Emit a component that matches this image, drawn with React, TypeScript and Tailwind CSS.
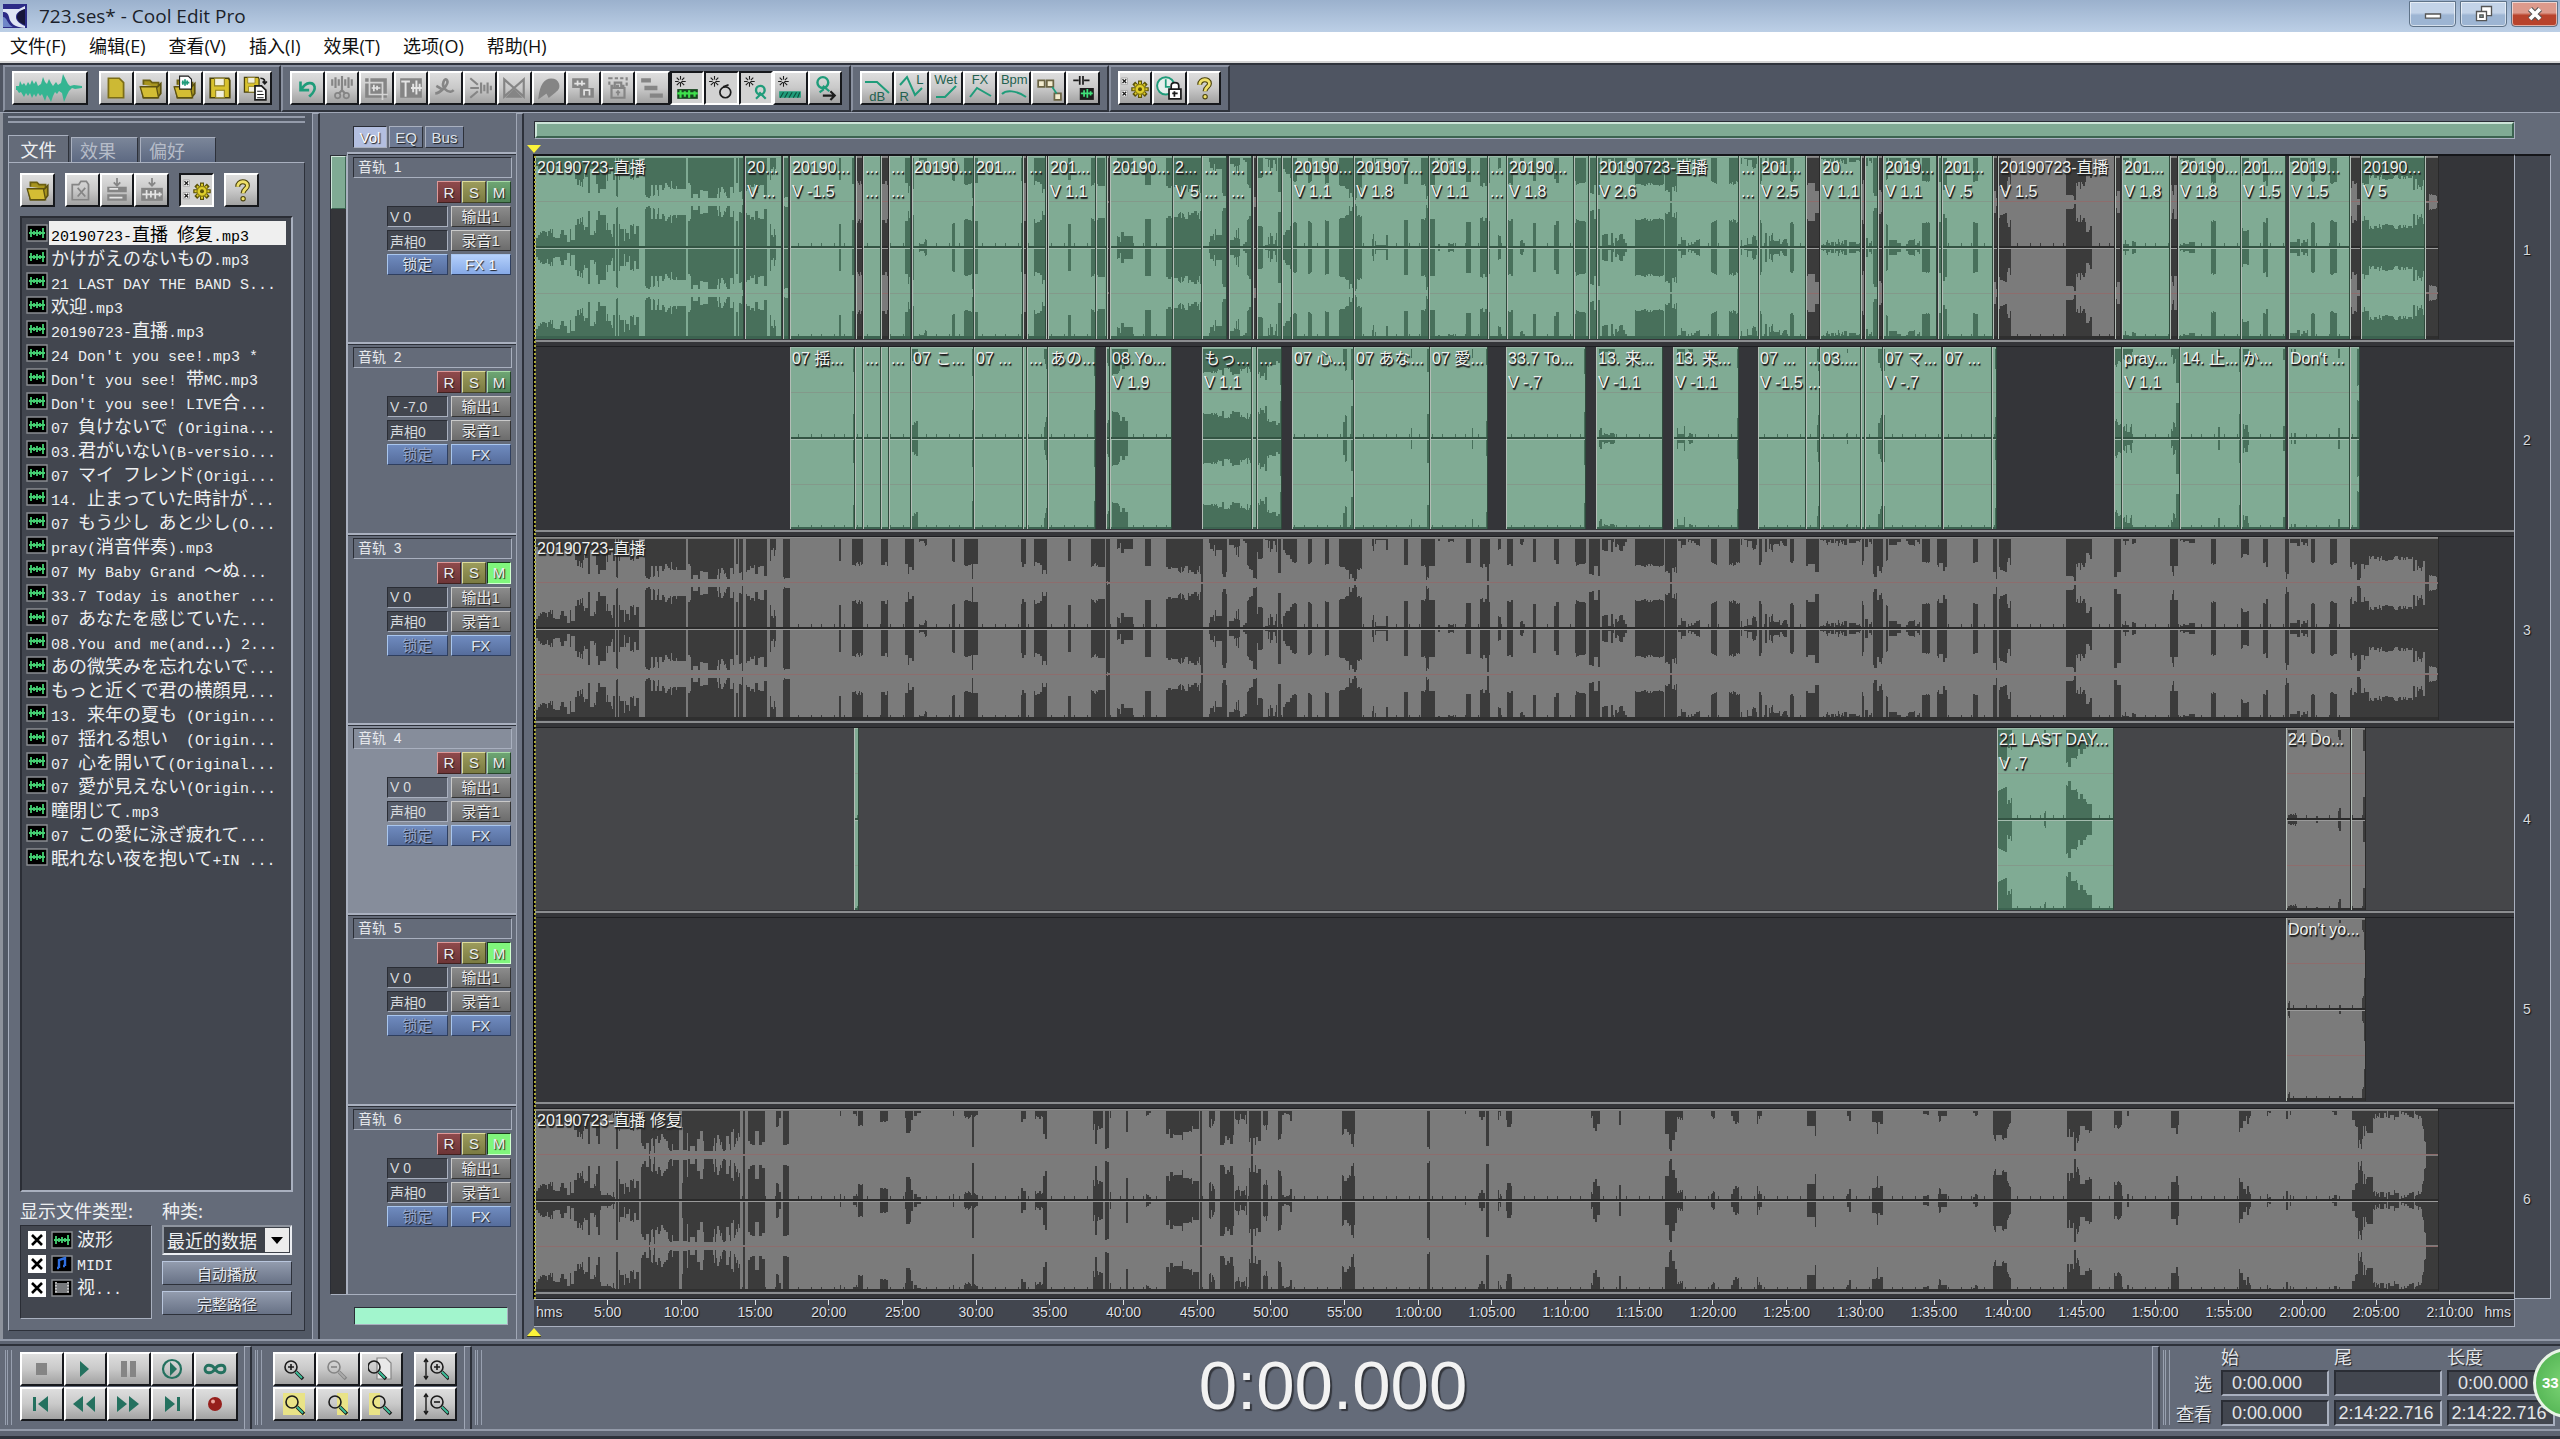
import type { ReactNode } from 'react'
import clsx from 'clsx'

/** Session length in timeline units; one unit is one pixel at full width. */
const SPAN = 1979
const TRACK_H = 182

/** [start, end, min depth, max depth]: where the peaks fall short of full scale. */
type Dip = [number, number, number, number]

const LIVE: Dip[] = [
  [0, 40, 0.08, 0.4], [40, 78, 0.2, 0.85], [78, 80, 0.3, 0.5], [81, 83, 0.85, 0.88], [84, 104, 0.1, 0.5],
  [110, 116, 0.75, 0.95], [116, 136, 0.55, 0.85], [136, 151, 0.5, 0.7], [153, 168, 0.5, 0.9], [168, 199, 0.5, 0.9],
  [201, 203, 0.4, 0.6], [204, 208, 0.7, 0.95], [211, 222, 0.5, 0.85], [222, 232, 0.6, 0.85], [235, 241, 0.2, 0.5],
  [248, 255, 0.84, 0.88], [304, 306, 0.45, 0.5], [317, 328, 0.5, 0.65], [346, 353, 0.5, 0.6], [370, 379, 0.55, 0.8],
  [384, 392, 0, 0.2], [417, 420, 0.48, 0.52], [429, 443, 0.55, 0.6], [437, 438, 0.9, 0.9], [486, 491, 0.5, 0.65],
  [499, 507, 0.5, 0.6], [507, 512, 0.65, 0.8], [533, 536, 0.45, 0.5], [556, 570, 0.5, 0.65], [571, 575, 0.93, 0.98],
  [582, 598, 0, 0.4], [610, 616, 0.55, 0.62], [631, 666, 0.6, 0.78], [666, 668, 1, 1], [674, 687, 0, 0.4],
  [687, 692, 0.6, 0.9], [694, 712, 0, 0.4], [712, 718, 0.55, 0.7], [718, 722, 0.85, 0.95], [722, 728, 0.2, 0.5],
  [730, 742, 0, 0.3], [743, 746, 0.7, 0.8], [748, 757, 0.2, 0.5], [757, 762, 0.5, 0.6], [773, 777, 0.5, 0.55],
  [790, 794, 0.55, 0.6], [804, 827, 0.6, 0.7], [814, 822, 0.78, 0.95], [837, 853, 0, 0.3], [869, 873, 0.55, 0.6],
  [886, 900, 0.58, 0.62], [891, 894, 0.85, 0.95], [902, 920, 0, 0.08], [931, 936, 0.5, 0.6], [945, 955, 0.55, 0.65],
  [952, 954, 0.9, 0.95], [963, 966, 0.1, 0.4], [972, 978, 0.55, 0.62], [985, 989, 0, 0.15], [998, 1001, 0.5, 0.55],
  [1019, 1024, 0.45, 0.6], [1040, 1051, 0.5, 0.6], [1054, 1059, 0.6, 0.8], [1059, 1065, 0.6, 0.95],
  [1067, 1092, 0, 0.3], [1100, 1129, 0.55, 0.62], [1130, 1142, 0.6, 0.8], [1135, 1137, 0.95, 0.98],
  [1143, 1165, 0, 0.2], [1176, 1182, 0.52, 0.58], [1194, 1205, 0.5, 0.6], [1206, 1222, 0, 0.25],
  [1224, 1227, 0.5, 0.58], [1230, 1252, 0, 0.3], [1255, 1259, 0.48, 0.55], [1271, 1280, 0.5, 0.6],
  [1280, 1284, 0.6, 0.9], [1285, 1326, 0, 0.15], [1327, 1329, 0.4, 0.6], [1330, 1340, 0, 0.2], [1338, 1348, 0.5, 0.9],
  [1351, 1353, 0.45, 0.5], [1354, 1385, 0, 0.15], [1387, 1395, 0.5, 0.55], [1402, 1412, 0.5, 0.75],
  [1438, 1443, 0.5, 0.55], [1458, 1462, 0.7, 0.9], [1464, 1472, 0.6, 0.75], [1472, 1476, 0.3, 0.6],
  [1531, 1538, 0.6, 0.85], [1538, 1541, 0.85, 0.95], [1541, 1551, 0.5, 0.7], [1551, 1557, 0.3, 0.5],
  [1579, 1586, 0.6, 0.9], [1588, 1601, 0, 0.2], [1635, 1643, 0.55, 0.9], [1645, 1660, 0, 0.12],
  [1676, 1681, 0.52, 0.57], [1706, 1714, 0.3, 0.5], [1728, 1733, 0.5, 0.65], [1750, 1754, 0.7, 0.9],
  [1755, 1773, 0, 0.2], [1776, 1780, 0.5, 0.55], [1795, 1802, 0.5, 0.58], [1815, 1822, 0.5, 0.7],
  [1822, 1826, 0.8, 0.95], [1826, 1834, 0.5, 0.7], [1834, 1878, 0.35, 0.5], [1878, 1890, 0.45, 0.75],
  [1890, 1894, 1, 1], [1894, 1902, 0.78, 0.85], [1902, 1906, 1, 1],
]

const REPAIRED: Dip[] = [
  [0, 39, 0.08, 0.4], [39, 65, 0.2, 0.8], [65, 80, 0.05, 0.2], [81, 83, 0.8, 0.85], [84, 104, 0.1, 0.45],
  [106, 122, 0.55, 0.95], [122, 144, 0.5, 0.9], [147, 205, 0.35, 0.9], [208, 210, 1, 1], [213, 230, 0.45, 0.8],
  [241, 246, 0.1, 0.5], [248, 254, 0.73, 0.76], [305, 306, 0.1, 0.1], [318, 322, 0.05, 0.15], [323, 328, 0.3, 0.35],
  [345, 353, 0.22, 0.25], [370, 378, 0.1, 0.5], [378, 386, 0, 0.18], [418, 419, 0.1, 0.1], [429, 443, 0.08, 0.17],
  [437, 439, 0.8, 0.8], [486, 491, 0.15, 0.4], [500, 508, 0.1, 0.2], [508, 512, 0.5, 0.65], [558, 568, 0.2, 0.45],
  [560, 562, 0.7, 0.75], [570, 574, 0.8, 0.85], [575, 580, 0, 0.2], [591, 593, 0.4, 0.5], [611, 616, 0, 0.12],
  [631, 664, 0.3, 0.7], [665, 667, 1, 1], [674, 680, 0.15, 0.4], [685, 699, 0.3, 0.75], [700, 712, 0, 0.3],
  [714, 726, 0.55, 0.8], [716, 718, 0.95, 0.95], [728, 733, 0.2, 0.45], [743, 747, 0.5, 0.68], [747, 757, 0, 0.3],
  [807, 820, 0.4, 0.55], [816, 819, 0.7, 0.85], [892, 895, 0.7, 0.85], [930, 934, 0, 0.12], [944, 950, 0, 0.2],
  [951, 954, 0.75, 0.85], [963, 966, 0, 0.2], [971, 977, 0.2, 0.4], [1056, 1065, 0.1, 0.5], [1084, 1086, 0.3, 0.4],
  [1130, 1142, 0.3, 0.7], [1134, 1137, 0.8, 0.9], [1142, 1148, 0.1, 0.2], [1176, 1180, 0.1, 0.2],
  [1196, 1204, 0.1, 0.3], [1222, 1227, 0.1, 0.3], [1272, 1281, 0.3, 0.6], [1312, 1316, 0.1, 0.3],
  [1337, 1348, 0.2, 0.55], [1388, 1395, 0, 0.15], [1403, 1412, 0.1, 0.3], [1438, 1443, 0.05, 0.12],
  [1458, 1472, 0.5, 0.68], [1472, 1476, 0.2, 0.4], [1532, 1545, 0.4, 0.75], [1539, 1541, 0.85, 0.9],
  [1545, 1557, 0.25, 0.5], [1579, 1587, 0.3, 0.45], [1592, 1594, 0.1, 0.12], [1636, 1644, 0.3, 0.65],
  [1704, 1708, 0.3, 0.5], [1708, 1716, 0.1, 0.3], [1732, 1736, 0, 0.12], [1751, 1756, 0, 0.18], [1796, 1802, 0, 0.1],
  [1817, 1823, 0.15, 0.4], [1823, 1828, 0.6, 0.98], [1828, 1838, 0.3, 0.6], [1838, 1887, 0, 0.2],
  [1887, 1889, 0.3, 0.4], [1889, 1891, 0.6, 0.7], [1891, 1906, 1, 1],
]

const BACKING: Dip[] = [
  [318, 320, 0.5, 0.5], [376, 383, 0.1, 0.4], [437, 439, 0.6, 0.6], [509, 512, 0.2, 0.5], [559, 561, 0.6, 0.6],
  [571, 575, 0.2, 0.4], [577, 583, 0.5, 0.7], [583, 593, 0.35, 0.55], [668, 717, 0.4, 0.6], [722, 732, 0.5, 0.7],
  [732, 745, 0.1, 0.4], [745, 747, 0.8, 0.8], [808, 812, 0.3, 0.5], [816, 819, 0.7, 0.7], [876, 877, 0.2, 0.2],
  [892, 894, 0.5, 0.5], [937, 938, 0.2, 0.2], [951, 953, 0.3, 0.6], [1049, 1051, 0.5, 0.8], [1064, 1070, 0.05, 0.25],
  [1070, 1080, 0, 0.1], [1142, 1150, 0.05, 0.25], [1150, 1158, 0, 0.1], [1202, 1204, 0.3, 0.6], [1282, 1285, 0.2, 0.5],
  [1312, 1316, 0, 0.1], [1343, 1350, 0.3, 0.5], [1406, 1409, 0.3, 0.6], [1460, 1463, 0.4, 0.8], [1579, 1586, 0.2, 0.4],
  [1586, 1598, 0, 0.3], [1636, 1641, 0.1, 0.4], [1641, 1645, 0.5, 0.8], [1683, 1685, 0.2, 0.25], [1704, 1706, 0.5, 0.5],
  [1708, 1714, 0.1, 0.3], [1748, 1751, 0.2, 0.6], [1756, 1761, 0, 0.12], [1803, 1805, 0.2, 0.25], [1822, 1825, 0.5, 0.9],
]

const INSERT: Dip[] = [
  [1463, 1472, 0.6, 0.7], [1472, 1477, 0.2, 0.5], [1509, 1511, 0.1, 0.15], [1531, 1541, 0.5, 0.85],
  [1541, 1551, 0.4, 0.65], [1551, 1557, 0.1, 0.5], [1753, 1762, 0, 0.15], [1781, 1785, 0, 0.05], [1803, 1806, 0.1, 0.25],
  [1828, 1831, 0.3, 0.5],
]

const ENCORE: Dip[] = [[1753, 1755, 0.1, 0.3], [1804, 1806, 0.05, 0.08], [1827, 1829, 0.2, 0.3], [1829, 1831, 0.5, 0.8]]

type Clip = { at: [number, number]; label?: string; vol?: string; muted?: boolean }

const c = (from: number, to: number, label?: string, vol?: string): Clip => ({ at: [from, to], label, vol })
const m = (from: number, to: number, label?: string, vol?: string): Clip => ({ at: [from, to], label, vol, muted: true })

type Track = { id: number; vol: string; on?: boolean; fx?: boolean; active?: boolean; dips: Dip[]; clips: Clip[] }

const TRACKS: Track[] = [
  {
    id: 1,
    vol: 'V 0',
    fx: true,
    dips: LIVE,
    clips: [
      c(0, 209, '20190723-直播'), c(210, 247, '20...', 'V ...'), c(248, 254), c(255, 320, '20190...', 'V -1.5'), m(321, 328),
      c(328, 346, '...', '...'), m(346, 354), c(354, 376, '...', '...'), c(377, 439, '20190...'), c(439, 488, '201...'),
      m(488, 492), c(492, 511, '...'), m(511, 513), c(513, 561, '201...', 'V 1.1'), c(561, 572), m(572, 575),
      c(575, 638, '20190...'), c(638, 667, '2...', 'V 5'), c(667, 692, '...', '...'), c(694, 717, '...', '...'), m(718, 722),
      c(722, 747, '...'), c(747, 757), c(757, 819, '20190...', 'V 1.1'), c(819, 894, '201907...', 'V 1.8'),
      c(894, 953, '2019...', 'V 1.1'), c(953, 972, '...', '...'), c(972, 1039, '20190...', 'V 1.8'), c(1039, 1054),
      c(1054, 1062), c(1062, 1204, '20190723-直播', 'V 2.6'), c(1204, 1224, '...', '...'), c(1224, 1271, '201...', 'V 2.5'),
      m(1271, 1285), c(1285, 1326, '20...', 'V 1.1'), m(1326, 1330), c(1330, 1343), m(1343, 1348),
      c(1348, 1402, '2019...', 'V 1.1'), c(1403, 1407), c(1407, 1458, '201...', 'V .5'), m(1458, 1463),
      m(1463, 1580, '20190723-直播', 'V 1.5'), m(1580, 1586), c(1587, 1635, '201...', 'V 1.8'), m(1635, 1643),
      c(1643, 1706, '20190...', 'V 1.8'), c(1706, 1751, '201...', 'V 1.5'), c(1754, 1815, '2019...', 'V 1.5'),
      m(1815, 1826), c(1826, 1890, '20190...', 'V 5'), m(1890, 1904),
    ],
  },
  {
    id: 2,
    vol: 'V -7.0',
    dips: BACKING,
    clips: [
      c(255, 320, '07 揺...'), c(320, 328), c(328, 346, '...'), c(346, 354), c(354, 376, '...'), c(376, 439, '07 こ...'),
      c(439, 488, '07 ...'), c(488, 492), c(492, 513, '...'), c(513, 561, 'あの...'), c(571, 575), c(575, 637, '08.Yo...', 'V 1.9'),
      c(667, 717, 'もっ...', 'V 1.1'), c(717, 722), c(722, 747, '...'), c(757, 819, '07 心...'), c(819, 895, '07 あな...'),
      c(895, 953, '07 愛...'), c(971, 1051, '33.7 To...', 'V -.7'), c(1061, 1128, '13. 来...', 'V -1.1'),
      c(1138, 1204, '13. 来...', 'V -1.1'), c(1223, 1271, '07 ...', 'V -1.5'), c(1271, 1285, '...', '...'),
      c(1285, 1326, '03....'), c(1326, 1330), c(1330, 1348), c(1348, 1407, '07 マ...', 'V -.7'), c(1408, 1457, '07 ...'),
      c(1457, 1462), c(1579, 1587), c(1587, 1645, 'pray...', 'V 1.1'), c(1645, 1706, '14. 止...'), c(1706, 1751, 'か...'),
      c(1753, 1815, "Don't ..."), c(1815, 1825),
    ],
  },
  { id: 3, vol: 'V 0', on: true, dips: LIVE, clips: [m(0, 1904, '20190723-直播')] },
  {
    id: 4,
    vol: 'V 0',
    active: true,
    dips: INSERT,
    clips: [c(319, 324), c(1462, 1579, '21 LAST DAY...', 'V .7'), m(1751, 1816, '24 Do...'), m(1816, 1831)],
  },
  { id: 5, vol: 'V 0', on: true, dips: ENCORE, clips: [m(1751, 1831, "Don't yo...")] },
  { id: 6, vol: 'V 0', on: true, dips: REPAIRED, clips: [m(0, 1904, '20190723-直播 修复')] },
]

const FILES = [
  '20190723-直播 修复.mp3', 'かけがえのないもの.mp3', '21 LAST DAY THE BAND S...', '欢迎.mp3', '20190723-直播.mp3',
  "24 Don't you see!.mp3 *", "Don't you see! 带MC.mp3", "Don't you see! LIVE合...", '07 負けないで (Origina...',
  '03.君がいない(B-versio...', '07 マイ フレンド(Origi...', '14. 止まっていた時計が...', '07 もう少し あと少し(O...',
  'pray(消音伴奏).mp3', '07 My Baby Grand ～ぬ...', '33.7 Today is another ...', '07 あなたを感じていた...',
  '08.You and me(and…) 2...', 'あの微笑みを忘れないで...', 'もっと近くで君の横顔見...', '13. 来年の夏も (Origin...',
  '07 揺れる想い　(Origin...', '07 心を開いて(Original...', '07 愛が見えない(Origin...', '瞳閉じて.mp3',
  '07 この愛に泳ぎ疲れて...', '眠れない夜を抱いて+IN ...',
]

const TICKS = Array.from({ length: 26 }, (_, i) => {
  const min = (i + 1) * 5
  return min < 60 ? `${min}:00` : `${Math.floor(min / 60)}:${String(min % 60).padStart(2, '0')}:00`
})

const RAISED = 'border border-t-[#a9b0bf] border-l-[#a9b0bf] border-b-[#2d313a] border-r-[#2d313a]'
const SUNKEN = 'border border-t-[#2a2d35] border-l-[#2a2d35] border-b-[#a9b0bf] border-r-[#a9b0bf]'
const SHADOW = '[text-shadow:1px_1px_1px_#1a1c20]'

/** Expands a dip list to one depth per unit. Seeded, so it draws the same each time. */
function depths(dips: Dip[]) {
  const out = new Float32Array(SPAN)
  let seed = 7
  const rand = () => (seed = (seed * 16807) % 2147483647) / 2147483647
  for (const [from, to, lo, hi] of dips) {
    let v = 0
    for (let x = from; x < to; x++) {
      if (x === from || rand() > 0.45) v = lo + rand() * (hi - lo)
      out[x] = v
    }
  }
  return out
}

function Waves({ track }: { track: Track }) {
  const d = depths(track.dips)
  return (
    <svg
      className="absolute inset-0 size-full"
      viewBox={`0 0 ${SPAN} ${TRACK_H}`}
      preserveAspectRatio="none"
      shapeRendering="crispEdges"
      aria-hidden="true"
    >
      {track.clips.map(({ at: [a, b], muted }) => {
        const dark = muted ? '#3b3b3b' : '#48705b'
        let path = ''
        for (let x = a; x < b; x++) {
          const h = d[x] * 45
          const floor = d[x] === 0 && (x * 7919) % 23 < 2 ? 3 : h
          for (const top of [1, 92]) {
            if (h > 1) path += `M${x} ${top + 1}h1v${h.toFixed(0)}h-1z`
            if (floor > 1) path += `M${x} ${top + 89}h1v-${floor.toFixed(0)}h-1z`
          }
        }
        return (
          <g key={a}>
            <rect x={a} width={b - a} height={TRACK_H} fill={muted ? '#7b7b7b' : '#80ab94'} />
            <path d={path} fill={dark} />
            <rect x={a} width={b - a} y="45" height="1" fill={muted ? '#8d6d6d' : '#83998a'} />
            <rect x={a} width={b - a} y="137" height="1" fill={muted ? '#8d6d6d' : '#83998a'} />
            <rect x={a} width={b - a} height="1" fill={muted ? '#8c8c8c' : '#9ab8a8'} />
            <rect x={a} width={b - a} y="90" height="2" fill={muted ? '#2a2a2a' : '#335443'} />
            <rect x={a} width={b - a} y="92" height="1" fill={muted ? '#9a9a9a' : '#a3bcae'} />
            <rect x={a} width={b - a} y="180" height="2" fill={muted ? '#2f2f2f' : '#3c6350'} />
            <rect x={a} width="1" height={TRACK_H} fill="#b3bdb6" />
            <rect x={b - 1} width="1" height={TRACK_H} fill={muted ? '#2a2a2a' : '#2f4a3c'} />
          </g>
        )
      })}
    </svg>
  )
}

function TrackLane({ track }: { track: Track }) {
  return (
    <div className="flex min-h-0 flex-1 flex-col bg-[#343539]">
      <div className={clsx('relative min-h-0 flex-1', track.active && 'bg-[#454649]')}>
        <Waves track={track} />
        {track.clips
          .filter((clip) => clip.label)
          .map(({ at: [a, b], label, vol }) => (
            <div
              key={a}
              className="absolute inset-y-0 overflow-hidden pl-[2px] text-[16px] leading-6 whitespace-pre text-[#f0f2f0] [text-shadow:1px_1px_0_#222,1px_2px_1px_#222]"
              style={{ left: `${(a / SPAN) * 100}%`, width: `${((b - a) / SPAN) * 100}%` }}
            >
              <div>{label}</div>
              {vol && <div>{vol}</div>}
            </div>
          ))}
      </div>
      <div className="mt-px h-[2px] bg-[#8b8d90]" />
      <div className="h-[5px] border-b border-[#1e1f22]" />
    </div>
  )
}

function Icon({ children, box = '0 0 24 24', className = 'size-[26px]' }: { children: ReactNode; box?: string; className?: string }) {
  return (
    <svg viewBox={box} className={className} fill="none" strokeWidth="1.6" aria-hidden="true">
      {children}
    </svg>
  )
}

const METAL = 'bg-linear-to-b from-[#dedede] via-[#c9c9c9] to-[#a2a2a2]'

function ToolButton({ name, on, className, children }: { name: string; on?: boolean; className?: string; children: ReactNode }) {
  return (
    <button
      type="button"
      title={name}
      aria-label={name}
      className={clsx(
        'flex h-[34px] min-w-0 items-center justify-center border-2',
        on
          ? 'border-t-[#16181c] border-r-white border-b-white border-l-[#16181c] bg-[#d2d2d2]'
          : `border-t-white border-r-[#16181c] border-b-[#16181c] border-l-white ${METAL}`,
        className ?? 'flex-1',
      )}
    >
      {children}
    </button>
  )
}

const G = '#1f9c7a'
const D = '#858585'
const K = '#1c1c1c'

const FOLDER = (
  <>
    <path d="M5 9V5h6l2 2h6v4" fill="#a8951f" stroke="#6b5f12" />
    <path d="M3 11h15l3-3v9l-3 4H5z" fill="#a8951f" stroke="#5d5210" />
    <path d="M2 11h15l2 10H5z" fill="#d3bd34" stroke="#5d5210" strokeWidth="1.200" />
  </>
)
const FLOPPY = (
  <>
    <path d="M3 3h17l1 2v16H3z" fill="#d8c22e" stroke="#4a420c" />
    <path d="M7 3h9v7H7zM8 14h8v7H8z" fill="#f1efdc" stroke="#8f7f1e" strokeWidth="1" />
  </>
)
const SPARK = <path d="M6 1v10M1 6h10M2.5 2.5l7 7M9.5 2.5l-7 7" stroke={K} strokeWidth="1" strokeDasharray="3.2 2.6 4" />
const GEAR = (
  <>
    <path d="M16 6v14M9 13h14M11 8l10 10M21 8 11 18" stroke="#5b5208" strokeWidth="3.200" />
    <path d="M16 7v12M10 13h12M12 9l8 8M20 9l-8 8" stroke="#dccb2c" strokeWidth="1.600" />
    <circle cx="16" cy="13" r="4" fill="#e0cf2c" stroke="#8f8214" strokeWidth="1" />
    <circle cx="16" cy="13" r="1.600" fill="#5b5208" />
    <path d="M1 4h5v5H1zM1 14h5v5H1z" fill="#fff" stroke="#999" strokeWidth=".6" />
    <path d="m2 5 3 3m0-3L2 8m0 7 3 3m0-3-3 3" stroke={K} strokeWidth="1" />
  </>
)
const HELP = (
  <>
    <path d="M8 9c0-6 9-6 9-1 0 3-4 3-4 7" stroke="#4a420c" strokeWidth="4.6" />
    <path d="M8 9c0-6 9-6 9-1 0 3-4 3-4 7" stroke="#efe06a" strokeWidth="2.6" />
    <circle cx="13" cy="20" r="2" fill="#efe06a" stroke="#4a420c" strokeWidth="1" />
  </>
)
const OPTIONS = <Icon className="size-[30px]">{GEAR}</Icon>
const QUERY = <Icon>{HELP}</Icon>

const FILE_TOOLS: [string, ReactNode][] = [
  ['新建', <path key="n" d="M5 3h10l4 4v14H5z" fill="#cdb934" stroke="#7b6d17" />],
  ['打开', FOLDER],
  ['追加', <g key="a">{FOLDER}<path d="M7 1h8l3 3v9H7z" fill="#fff" stroke={K} strokeWidth="1" /><path d="M12 4v6M9 7h7M10 5v4m4-4v4" stroke={G} /></g>],
  ['保存', FLOPPY],
  ['另存为', <g key="s"><g transform="scale(.75)">{FLOPPY}</g><path d="M12 10h6l4 4v9H12z" fill="#fff" stroke={K} /><path d="M14 15h5m-5 3h6m-6 3h6" stroke={K} strokeWidth="1" /><path d="M17 3c4 0 4 2 4 5m-2-2 2 2 2-2" stroke={K} /></g>],
]

const EDIT_TOOLS: [string, ReactNode, boolean?][] = [
  ['撤消', <path key="u" d="M6 6v8h8M7 13C11 6 18 6 19 11c1 4-3 7-5 9" stroke={G} strokeWidth="2.4" />],
  ['分割', <g key="a" stroke={D}><path d="M12 1v13M3 4v6M6 2v10M9 4v6M15 4v6M18 2v10M21 4v6M12 14l-3 3m3-3 3 3" strokeWidth="2" /><circle cx="8" cy="19" r="2.5" /><circle cx="16" cy="19" r="2.5" /></g>],
  ['剪裁', <g key="b"><path d="M2 3h20v18H2z" fill={D} /><path d="M6 1v17h17M1 7h17v16" stroke="#d4d4d4" /><path d="M8 12h8M10 9v6m3-5v4" stroke="#e4e4e4" /></g>],
  ['切除', <g key="c"><path d="M2 3h20v18H2z" fill={D} /><path d="M3 6h8M7 6v14M12 12h10M14 8v8m3-11v13m3-10v7" stroke="#e4e4e4" strokeWidth="1.8" /></g>],
  ['合并', <path key="d" d="M3 17c4 0 13-8 11-12s-6 4-2 8 7 2 8 1M4 10l5 3" stroke={D} strokeWidth="2.4" />],
  ['接合', <path key="e" d="m3 3 7 6M3 21l7-6M3 12h8m2-5v10m3-8v6m3-8v10m3-7v4" stroke={D} strokeWidth="2" />],
  ['交叉淡化', <g key="f"><path d="m3 4 9 8 9-8v16l-9-8-9 8z" stroke={D} strokeWidth="2" /><path d="m4 21 8-8 8 8z" fill={D} /></g>],
  ['包络', <path key="g" d="M3 21c1-9 4-17 11-17s9 8 4 11l-6 5-2-4z" fill={D} stroke={D} />],
  ['循环', <g key="h"><path d="M2 3h15v9H2zM9 12h13v9H9z" fill={D} /><path d="M4 8h10M7 5v5m4-5v5M13 19v-5h5v5" stroke="#e4e4e4" /></g>],
  ['锁定时间', <g key="i"><path d="M4 3h16v7H4z" stroke={D} strokeDasharray="3 2" strokeWidth="2" /><path d="M6 12h12v9H6zM9 12V7h6v5" stroke={D} strokeWidth="2" /><path d="M12 14v5m-2-3h4" stroke={D} /></g>],
  ['分组', <path key="j" d="M2 3h9v4H2zM5 10h12v4H5zM10 17h12v4H10z" fill={D} />],
  ['对齐剪辑', <g key="k">{SPARK}<path d="M3 13h19v9H3z" fill="#17451f" /><path d="M3 17h19M6 14v7m4-6v5m4-6v7m5-6v5" stroke="#3fe04d" strokeWidth="2" /></g>, true],
  ['对齐循环', <g key="l">{SPARK}<circle cx="16" cy="16" r="5" stroke={K} /><path d="m14 11 5-2" stroke={K} /></g>, true],
  ['对齐提示', <g key="m">{SPARK}<circle cx="16" cy="14" r="4" stroke={G} strokeWidth="2.2" /><path d="m15 16 6 6m-9 0 4-4" stroke={G} strokeWidth="2" /></g>, true],
  ['对齐标尺', <g key="n">{SPARK}<path d="M2 15h20v6H2z" fill={G} /><path d="m3 21 3-5m1 5 3-5m1 5 3-5m1 5 3-5m1 5 2-5" stroke="#0d4d3b" strokeWidth="1" /></g>],
  ['提示列表', <g key="o"><circle cx="10" cy="7" r="5" stroke={G} strokeWidth="2.2" /><path d="m10 10 6 5M7 16l4-3" stroke={G} strokeWidth="2" /><path d="M10 19h11m-4-4 4 4-4 4" stroke={K} strokeWidth="2" /></g>],
]

/** Envelope buttons: a short caption with the curve drawn over it. */
function TextIcon({ text, line, low }: { text: string; line: string; low?: boolean }) {
  return (
    <span className="relative flex size-[30px] justify-center text-[13px] leading-none text-[#24614f]">
      <span className={low ? 'self-end' : 'self-start'}>{text}</span>
      <svg viewBox="0 0 30 30" className="absolute inset-0 size-full" fill="none" stroke={G} strokeWidth="2" aria-hidden="true">
        <path d={line} />
      </svg>
    </span>
  )
}

const VIEW_TOOLS: [string, ReactNode][] = [
  ['音量包络', <TextIcon key="db" text="dB" low line="M3 9h12l12 11" />],
  ['声相包络', <span key="lr" className="relative flex size-[30px] items-center justify-between px-[3px] text-[13px] leading-none text-[#24614f]"><span className="self-end">R</span><span className="self-start">L</span><svg viewBox="0 0 30 30" className="absolute inset-0 size-full" fill="none" stroke={G} strokeWidth="2" aria-hidden="true"><path d="m4 12 7-8 8 18 7-7" /></svg></span>],
  ['湿度', <TextIcon key="wet" text="Wet" line="M5 24h9l11-11" />],
  ['效果参数', <TextIcon key="fx" text="FX" line="m5 24 7-9 14 8" />],
  ['速度', <TextIcon key="bpm" text="Bpm" line="M3 21c4-4 14-4 24 3" />],
  ['控制点', <Icon key="pts"><path d="M2 5h6v6H2zM10 5h6v6h-6zM17 17h6v6h-6z" fill="#f3ecd0" stroke="#6b6444" /><path d="m15 11 4 6" stroke={G} /></Icon>],
  ['混音', <Icon key="mix"><path d="M9 1v8m3-8v8M3 5h5m5 0h5" stroke={K} /><path d="M9 12h13v11H9z" fill={K} /><path d="M10 17h11M13 14v6m3-7v8m3-6v4" stroke="#3fe07a" /></Icon>],
]

function ToolGroup({ className, children }: { className: string; children: ReactNode }) {
  return <div className={clsx('flex h-[47px] items-center border-2 border-t-[#8a91a0] border-r-[#2f333c] border-b-[#2f333c] border-l-[#8a91a0] bg-[#646b79] pb-px', className)}>{children}</div>
}

function Grip() {
  return (
    <div className="flex h-full gap-[2px] py-1" aria-hidden="true">
      <div className="w-[3px] border-r border-l border-[#98a0b0]" />
      <div className="w-[2px] border-r border-[#98a0b0]" />
    </div>
  )
}

function Splitter() {
  return <div className="w-2 shrink-0 border-t border-r-2 border-l border-t-[#a0a7b6] border-r-[#2d313a] border-l-[#a0a7b6] bg-[#6c7382]" aria-hidden="true" />
}

function HBar() {
  return <div className="h-[7px] shrink-0 border-t-2 border-b-2 border-t-[#9299a8] border-b-[#2d313a] bg-[#5d6472]" aria-hidden="true" />
}

function WaveBadge({ children }: { children?: ReactNode }) {
  return (
    <svg viewBox="0 0 22 18" className="h-[18px] w-[22px] shrink-0" fill="none" aria-hidden="true">
      <path d="M1 1h20v16H1z" fill="#000" stroke="#8a8d92" strokeWidth="1.4" />
      {children ?? <path d="M3 9h16M5 5v8M8 7v4M11 6v6M14 7v4M17 4v10" stroke="#44cf72" strokeWidth="1.8" />}
    </svg>
  )
}

/** Half-width runs take a smaller monospace size so that two of them fill one full-width cell. */
function MixedText({ text }: { text: string }) {
  return (
    <>
      {text.split(/([\u2026\u3000-\uffef]+)/).map((run, i) =>
        i % 2 ? <span key={i}>{run}</span> : <span key={i} className="font-['Liberation_Mono',monospace] text-[15px]">{run}</span>,
      )}
    </>
  )
}

function TitleBar() {
  const box = 'flex h-[26px] w-[47px] items-center justify-center rounded-b-[4px] border border-[#5f7389] shadow-[inset_0_0_0_1px_#ffffff90]'
  return (
    <header className="flex h-8 shrink-0 items-center justify-between bg-linear-to-b from-[#9bb1cd] to-[#bccfe6] pr-[2px]">
      <div className="flex items-center gap-3 pl-[3px] font-['Open_Sans','Noto_Sans',sans-serif] text-[19px] text-[#1b1f2a]">
        <svg viewBox="0 0 24 24" className="size-6" aria-hidden="true">
          <path d="M0 0h24v24H0z" fill="#2c2c86" />
          <path d="M0 5h16l6-3v3c-6 2-9 4-9 8 0 4 4 7 9 9v2C11 23 7 19 6 13 5 9 3 8 0 8z" fill="#dfe6f4" />
          <path d="M22 5c-6 2-8 5-8 8s3 6 8 8z" fill="#16163a" />
          <path d="M0 13c4 0 4 7 10 10H0z" fill="#6f86c8" />
        </svg>
        <h1>723.ses* - Cool Edit Pro</h1>
      </div>
      <div className="flex gap-1 self-start pt-px">
        <button type="button" aria-label="最小化" className={clsx(box, 'bg-linear-to-b from-[#c3d3e8] from-45% to-[#9db5d3] to-55%')}>
          <Icon className="size-5"><path d="M3 12h18v5H3z" fill="#fff" stroke="#555" /></Icon>
        </button>
        <button type="button" aria-label="还原" className={clsx(box, 'bg-linear-to-b from-[#c3d3e8] from-45% to-[#9db5d3] to-55%')}>
          <Icon className="size-5"><path d="M9 3h12v11H9z" fill="#fff" stroke="#555" /><path d="M3 9h12v11H3z" fill="#fff" stroke="#555" /><path d="M7 13h4v3H7z" fill="#8aa" stroke="#555" /></Icon>
        </button>
        <button type="button" aria-label="关闭" className={clsx(box, 'bg-linear-to-b from-[#dd9a8c] from-45% to-[#b8432c] to-55%')}>
          <Icon className="size-5"><path d="m6 6 12 12M18 6 6 18" stroke="#555" strokeWidth="7" /><path d="m6 6 12 12M18 6 6 18" stroke="#fff" strokeWidth="4.5" /></Icon>
        </button>
      </div>
    </header>
  )
}

function Toolbar() {
  return (
    <div className="flex h-[49px] shrink-0 items-start border-t-2 border-[#2f333c] bg-[#4f5562] pl-[3px]" role="toolbar" aria-label="工具栏">
      <ToolGroup className="w-[278px] gap-[11px] px-[7px]">
        <ToolButton name="切换到波形编辑" className="w-[76px]">
          <svg viewBox="0 0 70 28" className="h-7 w-[70px]" fill="#35b592" aria-hidden="true">
            <path d="M1 12h3l1-5 2 4 2-2 2 3 2-4 2 3 2-5 2 4 2-3 2 5 3-2 2-7 2 5 2 2 2-5 2 4 2 3 3-4 2 3 3-2 2-9 3 6 2 4 2 2 4-1 8 1v2l-7 1-3-1-3 3-2 4-3 7-2-9-3-2-2 3-2-2-2 4-2 6-2-4-2-3-2 6-3-7-2 2-2-3-2 4-2-3-2 4-2-5-2 3-2-3-2 4-3-5-2 1-2-3H1z" />
          </svg>
        </ToolButton>
        <div className="flex flex-1">
          {FILE_TOOLS.map(([name, art]) => (
            <ToolButton key={name} name={name}><Icon>{art}</Icon></ToolButton>
          ))}
        </div>
      </ToolGroup>
      <ToolGroup className="w-[570px] px-[7px]">
        {EDIT_TOOLS.map(([name, art, on]) => (
          <ToolButton key={name} name={name} on={on}><Icon>{art}</Icon></ToolButton>
        ))}
      </ToolGroup>
      <ToolGroup className="w-[258px] px-[7px]">
        {VIEW_TOOLS.map(([name, art]) => (
          <ToolButton key={name} name={name}>{art}</ToolButton>
        ))}
      </ToolGroup>
      <ToolGroup className="w-[121px] px-[7px]">
        <ToolButton name="选项">{OPTIONS}</ToolButton>
        <ToolButton name="时间锁定">
          <Icon>
            <circle cx="9" cy="10" r="8" fill="#e6efec" stroke={G} strokeWidth="1.8" />
            <path d="M9 4v7h4" stroke={G} />
            <path d="M12 13h11v9H12zM14 13v-3c0-4 7-4 7 0v3" fill="#fff" stroke={K} />
            <path d="M17 15v5m-2-3h5" stroke={K} />
          </Icon>
        </ToolButton>
        <ToolButton name="帮助">{QUERY}</ToolButton>
      </ToolGroup>
    </div>
  )
}

function TypeRow({ label, art }: { label: string; art?: ReactNode }) {
  return (
    <label className="flex h-6 items-center gap-1">
      <input type="checkbox" defaultChecked className="peer sr-only" />
      <svg viewBox="0 0 18 18" className="mr-px size-[18px] bg-white" fill="none" aria-hidden="true">
        <path d="m4 4 10 10M14 4 4 14" stroke="#000" strokeWidth="2.6" />
      </svg>
      <WaveBadge>{art}</WaveBadge>
      <span className="whitespace-nowrap"><MixedText text={label} /></span>
    </label>
  )
}

function FilePanel() {
  const small = 'h-6 border border-t-[#b9c6dd] border-l-[#b9c6dd] border-b-[#2d313a] border-r-[#2d313a] bg-linear-to-b from-[#939cae] to-[#687286] text-[15px] leading-none text-[#e8ebf0] ' + SHADOW
  return (
    <aside className="flex w-[312px] shrink-0 flex-col border-l-[3px] border-[#8d929c] bg-[#515865] pr-[7px] pb-2 pl-[5px] font-['Noto_Sans_CJK_SC','Noto_Sans_CJK_JP',sans-serif] text-[18px] leading-6 text-[#eef0f2]">
      <div className="mt-[3px] h-[7px] border-y-2 border-[#949baa]" aria-hidden="true" />
      <div className="mt-3 flex h-[27px] items-end" role="tablist">
        <button type="button" role="tab" aria-selected="true" className="h-[27px] w-[61px] border-t border-r border-l border-t-[#a9b0bf] border-r-[#2d313a] border-l-[#a9b0bf] bg-[#646b79]">文件</button>
        {['效果', '偏好'].map((tab, i) => (
          <button key={tab} type="button" role="tab" aria-selected="false" className={clsx('ml-[2px] h-[25px] border-t border-r border-l border-t-[#a9b0bf] border-r-[#2d313a] border-l-[#a9b0bf] bg-linear-to-b from-[#7b8699] to-[#5d6982] pl-2 text-left text-[#b6bcc8]', i ? 'w-[76px]' : 'w-[67px]')}>{tab}</button>
        ))}
      </div>
      <div className={clsx('flex min-h-0 flex-1 flex-col bg-[#646b79] px-[11px] pt-[10px] pb-[11px]', RAISED)}>
        <div className="flex shrink-0">
          <ToolButton name="打开文件" className="w-[35px]"><Icon>{FOLDER}</Icon></ToolButton>
          <div className="ml-[10px] flex w-[104px]">
            <ToolButton name="关闭文件"><Icon><path d="M3 7h6l2-3h5l2 3v14H3z" stroke={D} /><path d="m8 10 7 8m0-8-7 8" stroke={D} /></Icon></ToolButton>
            <ToolButton name="插入多轨"><Icon><path d="M12 1v7M9 5l3 3 3-3" stroke={D} /><path d="M3 9h18v5H3zM3 16h18v6H3z" fill={D} /><path d="M5 11h8m-8 8h12" stroke="#e4e4e4" /></Icon></ToolButton>
            <ToolButton name="编辑文件"><Icon><path d="M12 1v7M9 5l3 3 3-3" stroke={D} /><path d="M2 10h20v12H2z" fill={D} /><path d="M3 16h18M7 12v8m4-7v6m4-7v8m4-6v4" stroke="#e4e4e4" /></Icon></ToolButton>
          </div>
          <ToolButton name="高级选项" on className="ml-[10px] w-[35px]">{OPTIONS}</ToolButton>
          <ToolButton name="帮助" className="ml-[10px] w-[35px]">{QUERY}</ToolButton>
        </div>
        <ul className={clsx('mt-[9px] min-h-0 flex-1 overflow-hidden border-2 bg-[#42464f] py-[3px] pr-[5px] pl-1', SUNKEN)}>
          {FILES.map((file, i) => (
            <li key={file} className="flex h-6 items-center gap-px">
              <WaveBadge />
              <span className={clsx('h-6 flex-1 overflow-hidden pl-[2px] whitespace-pre', i === 0 && 'bg-[#efefef] text-black')}>
                <MixedText text={file} />
              </span>
            </li>
          ))}
        </ul>
        <div className="mt-[6px] grid shrink-0 grid-cols-[132px_130px] gap-x-[10px]">
          <div className="whitespace-nowrap" id="types">显示文件类型:</div>
          <label htmlFor="kind">种类:</label>
          <div role="group" aria-labelledby="types" className={clsx('mt-[3px] h-[94px] bg-[#42464f] pt-[2px] pl-[7px]', SUNKEN)}>
            <TypeRow label="波形" />
            <TypeRow label="MIDI" art={<path d="M8 13V5l6-2v8M6 13h2m4-2h2" stroke="#2f6fe0" strokeWidth="2.4" />} />
            <TypeRow label="视..." art={<><path d="M4 4h14v10H4z" fill="#77797c" /><path d="M5 3v12M17 3v12" stroke="#ddd" strokeWidth="1.6" strokeDasharray="1.5 1.5" /></>} />
          </div>
          <div className="mt-[3px] flex flex-col gap-[6px]">
            <div className="relative flex h-[30px] border-2 border-t-[#8f959f] border-r-[#eceef2] border-b-[#eceef2] border-l-[#8f959f] bg-[#3d4149]">
              <select id="kind" className="w-full appearance-none bg-transparent pl-[3px] text-[18px] leading-6">
                <option>最近的数据</option>
              </select>
              <svg viewBox="0 0 24 24" className="pointer-events-none absolute top-px right-px size-6 bg-[#ececec]" aria-hidden="true"><path d="M6 9h12l-6 7z" fill="#000" /></svg>
            </div>
            <button type="button" className={small}>自动播放</button>
            <button type="button" className={small}>完整路径</button>
          </div>
        </div>
      </div>
    </aside>
  )
}

function TrackHeader({ track }: { track: Track }) {
  const field = clsx('h-[21px] w-full min-w-0 pl-[2px] text-[14px] leading-none text-[#d7dade]', SUNKEN, track.active ? 'bg-[#575d6a]' : 'bg-[#42464f]')
  const grey = 'h-[21px] border border-t-[#c9c9c9] border-l-[#c9c9c9] border-b-[#333] border-r-[#333] bg-linear-to-b from-[#8c8c8c] to-[#6c6c6c] text-[15px] leading-none text-[#ececec] ' + SHADOW
  const blue = 'h-[21px] border border-t-[#a9c6ee] border-l-[#a9c6ee] border-b-[#2f3f60] border-r-[#2f3f60] text-[15px] leading-none ' + SHADOW
  const cap = 'h-[22px] w-6 border text-[15px] leading-none text-[#eee] ' + SHADOW
  const plain = 'bg-linear-to-b from-[#6f8bbf] to-[#566d9c] text-[#dfe5f0]'
  return (
    <section className={clsx('flex min-h-0 flex-1 flex-col items-end border-t-2 border-t-[#a9b0bf] pt-[3px] pr-1 pl-[5px] shadow-[inset_0_1px_0_#2d313a]', track.active ? 'bg-[#868d9b]' : 'bg-[#646b79]')}>
      <h2 className={clsx('h-[21px] w-full pl-1 text-[14px] leading-[19px] text-[#e6e8ec]', SUNKEN)}>
        音轨&nbsp; {track.id}
      </h2>
      <div className="mt-[3px] mr-px flex gap-px">
        <button type="button" aria-label="录音" className={clsx(cap, 'border-t-[#d99] border-r-[#402020] border-b-[#402020] border-l-[#d99] bg-linear-to-b from-[#8f4a4c] to-[#6c3436]')}>R</button>
        <button type="button" aria-label="独奏" className={clsx(cap, 'border-t-[#dddc9c] border-r-[#444422] border-b-[#444422] border-l-[#dddc9c] bg-linear-to-b from-[#9c9c5c] to-[#7b7b42]')}>S</button>
        <button type="button" aria-label="静音" aria-pressed={!!track.on} className={clsx(cap, track.on ? 'border-t-[#173b17] border-r-[#d0ffd0] border-b-[#d0ffd0] border-l-[#173b17] bg-[#80f67c]' : 'border-t-[#a9dca9] border-r-[#25452a] border-b-[#25452a] border-l-[#a9dca9] bg-linear-to-b from-[#6ea573] to-[#4f8357]')}>M</button>
      </div>
      <div className="mt-[3px] mr-px grid w-[124px] grid-cols-2 gap-x-[3px] gap-y-[3px]">
        <input aria-label={`音轨 ${track.id} 音量`} defaultValue={track.vol} className={field} />
        <button type="button" className={grey}>输出1</button>
        <input aria-label={`音轨 ${track.id} 声相`} defaultValue="声相0" className={field} />
        <button type="button" className={grey}>录音1</button>
        <button type="button" className={clsx(blue, plain, !track.fx && 'text-[#97a9cf]!')}>锁定</button>
        <button type="button" className={clsx(blue, track.fx ? 'bg-linear-to-b from-[#b4d0fb] to-[#86a9e6] text-[#f2f6ff]' : plain)}>{track.fx ? 'FX 1' : 'FX'}</button>
      </div>
    </section>
  )
}

function TrackControls() {
  return (
    <div className="flex w-[196px] shrink-0 flex-col bg-[#646b79] pl-[10px]">
      <div className="flex h-[39px] shrink-0 items-start gap-[2px] pt-[13px] pl-[23px]">
        {['Vol', 'EQ', 'Bus'].map((tab, i) => (
          <button key={tab} type="button" className={clsx('h-[22px] text-[15px] leading-none', SHADOW, i === 2 ? 'w-[39px]' : 'w-[34px]', i === 0 ? `${SUNKEN} bg-[#b3bfe0] text-white` : `${RAISED} bg-[#6e7a93] text-[#dfe3ea]`)}>{tab}</button>
        ))}
      </div>
      <div className="flex min-h-0 flex-1">
        <div className={clsx('mt-[3px] flex w-[17px] flex-col bg-[#343539]', SUNKEN)} aria-hidden="true">
          <div className="h-[53px] border border-t-[#cde5d8] border-r-[#3c6350] border-b-[#3c6350] border-l-[#cde5d8] bg-[#80ab94]" />
        </div>
        <div className="flex min-h-0 flex-1 flex-col border-b border-l border-[#a9b0bf]">
          {TRACKS.map((track) => <TrackHeader key={track.id} track={track} />)}
        </div>
      </div>
      <div className={clsx('mt-3 mr-2 mb-[14px] ml-6 h-[18px] shrink-0 bg-[#a2f5cd]', SUNKEN)} role="meter" aria-label="磁盘空间" aria-valuenow={100} />
    </div>
  )
}

function Timeline() {
  return (
    <div className="relative h-7 shrink-0 border-t border-r border-b border-[#a9b0bf] bg-[#42464f] text-[14px] leading-none text-[#dcdfe3] [text-shadow:1px_1px_1px_#111]">
      <span className="absolute top-[5px] left-[2px]">hms</span>
      {TICKS.map((tick, i) => (
        <span key={tick} className="absolute top-0 flex w-14 -translate-x-1/2 flex-col items-center" style={{ left: `${(((i + 1) * 73.65) / SPAN) * 100}%` }}>
          <span className="h-[5px] w-px bg-[#dcdfe3]" />
          <span>{tick}</span>
        </span>
      ))}
      <span className="absolute top-[5px] right-[3px]">hms</span>
    </div>
  )
}

function Session() {
  return (
    <main className="flex min-w-0 flex-1 flex-col bg-[#646b79] pl-[2px]">
      <div className="flex min-h-0 flex-1">
        <div className="flex min-w-0 flex-1 flex-col">
          <div className="mt-2 ml-2 flex h-[18px] shrink-0 border border-t-[#2a2d35] border-r-[#a9b0bf] border-b-[#a9b0bf] border-l-[#2a2d35]">
            <div className="flex-1 border-2 border-t-[#cde5d8] border-r-[#3c6350] border-b-[#3c6350] border-l-[#cde5d8] bg-[#80ab94]" aria-hidden="true" />
          </div>
          <svg viewBox="0 0 16 9" className="mt-[6px] h-[9px] w-4 shrink-0" aria-hidden="true"><path d="M1 0h14L8 8z" fill="#fbf33a" /></svg>
          <div className="ml-[7px] flex min-h-0 flex-1 flex-col border-t-2 border-r border-l-2 border-t-[#15161a] border-r-[#a9b0bf] border-l-black">
            <div className="relative flex min-h-0 flex-1 flex-col">
              {TRACKS.map((track) => <TrackLane key={track.id} track={track} />)}
              <div className="absolute inset-y-0 -left-px border-l-2 border-dotted border-[#a9a63c]" aria-hidden="true" />
            </div>
          </div>
        </div>
        <div className="mt-[41px] flex w-9 shrink-0 flex-col border-t-2 border-r border-b border-t-[#15161a] border-r-[#a9b0bf] border-b-[#a9b0bf] bg-[#42464f] pb-1 text-[14px] text-[#d7dade] [text-shadow:1px_1px_1px_#111]">
          {TRACKS.map((track) => <div key={track.id} className="flex flex-1 items-center pl-2">{track.id}</div>)}
        </div>
        <div className="w-[9px]" />
      </div>
      <div className="mr-[45px] ml-2 shrink-0"><Timeline /></div>
      <svg viewBox="0 0 16 12" className="h-3 w-4 shrink-0" aria-hidden="true"><path d="M1 9h14L8 1z" fill="#fbf33a" /><path d="M1 9.500h14" stroke="#3a3a20" /></svg>
    </main>
  )
}

const T = '#24715f'
const TRANSPORT: [string, ReactNode][] = [
  ['停止', <path key="a" d="M7 6h11v12H7z" fill={D} />],
  ['播放', <path key="b" d="M8 4v16l9-8z" fill={T} />],
  ['暂停', <path key="c" d="M5 4h6v16H5zM14 4h6v16h-6z" fill={D} />],
  ['播放到结尾', <g key="d"><circle cx="12" cy="12" r="9" stroke={T} strokeWidth="2.2" /><path d="M10 5v14l7-7z" fill={T} /></g>],
  ['循环播放', <path key="e" d="M12 12c-3-5-10-5-10 0s7 5 10 0 10-5 10 0-7 5-10 0z" stroke={T} strokeWidth="2.8" />],
  ['到开头', <path key="f" d="M4 5h3v14H4zM19 4v16l-10-8z" fill={T} />],
  ['倒放', <path key="g" d="M11 4v16L1 12zM23 4v16l-9-8z" fill={T} />],
  ['快进', <path key="h" d="M1 4v16l10-8zM13 4v16l10-8z" fill={T} />],
  ['到结尾', <path key="i" d="M17 5h3v14h-3zM5 4v16l10-8z" fill={T} />],
  ['录音', <g key="j"><circle cx="12" cy="12" r="7" fill="#961f1c" /><circle cx="10" cy="9.500" r="2" fill="#e9a49c" /></g>],
]

function Lens({ sign, dim, x = 0 }: { sign?: '+' | '-'; dim?: boolean; x?: number }) {
  return (
    <g transform={`translate(${x})`}>
      <circle cx="9" cy="10" r="6" stroke={dim ? D : K} strokeWidth="1.6" />
      <path d="m14 15 7 7" stroke={dim ? D : K} strokeWidth="3.6" />
      <path d="m14 15 6 6" stroke={dim ? '#aaa' : '#3cc09a'} strokeWidth="1.8" />
      {sign && <path d={sign === '+' ? 'M6 10h6M9 7v6' : 'M6 10h6'} stroke={dim ? D : K} />}
    </g>
  )
}

const PAPER = <path d="M9 1h9l5 5v16H9z" fill="#e9e9e9" stroke={D} strokeWidth="1.200" />
const ARROWS = <path d="M3 2v20M1 5l2-3 2 3M1 19l2 3 2-3" stroke={K} strokeWidth="1.400" />
const ZOOMS: [string, ReactNode][] = [
  ['放大', <Lens key="a" sign="+" />],
  ['缩小', <Lens key="b" sign="-" dim />],
  ['全部显示', <g key="c">{PAPER}<Lens x={-3} /></g>],
  ['放大选区', <g key="d"><path d="M1 1h22v22H1z" fill="#e9e387" /><Lens x={1} /></g>],
  ['放大左侧', <g key="e"><path d="M12 1h11v22H12z" fill="#e9e387" /><Lens x={1} /></g>],
  ['放大右侧', <g key="f"><path d="M1 1h11v22H1z" fill="#e9e387" /><Lens x={2} /></g>],
]
const VZOOMS: [string, ReactNode][] = [
  ['垂直放大', <g key="a">{ARROWS}<Lens sign="+" x={5} /></g>],
  ['垂直缩小', <g key="b">{ARROWS}<Lens sign="-" x={5} /></g>],
]

function ButtonGrid({ items, className }: { items: [string, ReactNode][]; className: string }) {
  return (
    <div className={clsx('grid content-start gap-y-px', className)}>
      {items.map(([name, art]) => <ToolButton key={name} name={name} className="w-full"><Icon box="0 0 26 24" className="h-6 w-[26px]">{art}</Icon></ToolButton>)}
    </div>
  )
}

function Readout({ label, values }: { label: string; values: string[] }) {
  return (
    <tr>
      <th scope="row" className="pr-[9px] text-right font-normal">{label}</th>
      {values.map((value, i) => (
        <td key={i} className="pr-[5px] pb-[4px]">
          <input
            aria-label={`${label} ${['始', '尾', '长度'][i]}`}
            defaultValue={value}
            className={clsx('block h-[26px] w-[108px] border-2 bg-[#42464f] text-center text-[18px]', SUNKEN, value.length < 10 ? 'pr-4' : 'pr-1')}
          />
        </td>
      ))}
    </tr>
  )
}

function BottomBar() {
  return (
    <footer className="flex h-[83px] shrink-0 items-stretch bg-[#646b79] pl-[5px]">
      <Grip />
      <ButtonGrid items={TRANSPORT} className="ml-2 w-[218px] grid-cols-5 pt-[6px]" />
      <div className="w-[6px]" />
      <Splitter />
      <div className="ml-[3px]"><Grip /></div>
      <ButtonGrid items={ZOOMS} className="ml-[11px] w-[130px] grid-cols-3 pt-[6px]" />
      <ButtonGrid items={VZOOMS} className="ml-[11px] w-[43px] pt-[6px]" />
      <div className="w-[7px]" />
      <Splitter />
      <div className="ml-[3px]"><Grip /></div>
      <output className="flex flex-1 items-center justify-center pb-1 pl-8 text-[69px] leading-none text-[#f2f2f2] [text-shadow:2px_2px_1px_#33363d]">0:00.000</output>
      <Splitter />
      <div className="ml-[3px]"><Grip /></div>
      <table className={clsx('ml-[3px] border-collapse self-start text-[18px] leading-6 text-[#e2e5e9]', SHADOW)}>
        <thead>
          <tr>
            <td className="w-[48px]" />
            {['始', '尾', '长度'].map((head) => <th key={head} scope="col" className="text-left font-normal">{head}</th>)}
          </tr>
        </thead>
        <tbody>
          <Readout label="选" values={['0:00.000', '', '0:00.000']} />
          <Readout label="查看" values={['0:00.000', '2:14:22.716', '2:14:22.716']} />
        </tbody>
      </table>
    </footer>
  )
}

export default function App() {
  return (
    <div className="relative flex h-screen w-full flex-col overflow-hidden bg-[#5d6472] font-['Liberation_Sans','Noto_Sans_CJK_SC','Noto_Sans_CJK_JP',sans-serif]">
      <TitleBar />
      <nav className="flex h-[31px] shrink-0 items-center gap-[23px] border-b-2 border-[#d5d5d5] bg-white pl-[10px] font-['Open_Sans','Noto_Sans_CJK_SC',sans-serif] text-[18px] text-[#111]">
        {['文件(F)', '编辑(E)', '查看(V)', '插入(I)', '效果(T)', '选项(O)', '帮助(H)'].map((item) => (
          <button key={item} type="button">{item}</button>
        ))}
      </nav>
      <Toolbar />
      <div className="flex min-h-0 flex-1 border-t border-[#a0a7b6]">
        <FilePanel />
        <Splitter />
        <TrackControls />
        <Splitter />
        <Session />
      </div>
      <HBar />
      <BottomBar />
      <div className="h-[10px] shrink-0 border-t-2 border-b-[3px] border-t-[#9299a8] border-b-[#2d313a]" />
      {/* Desktop widget hanging off the right edge of the screen. */}
      <div className="absolute -right-[43px] bottom-[21px] flex size-[70px] items-center rounded-full border-[3px] border-[#e9f4e6] bg-radial from-[#7fd678] to-[#48ad4b] pl-[6px] text-[15px] font-bold text-white">
        33
      </div>
    </div>
  )
}
